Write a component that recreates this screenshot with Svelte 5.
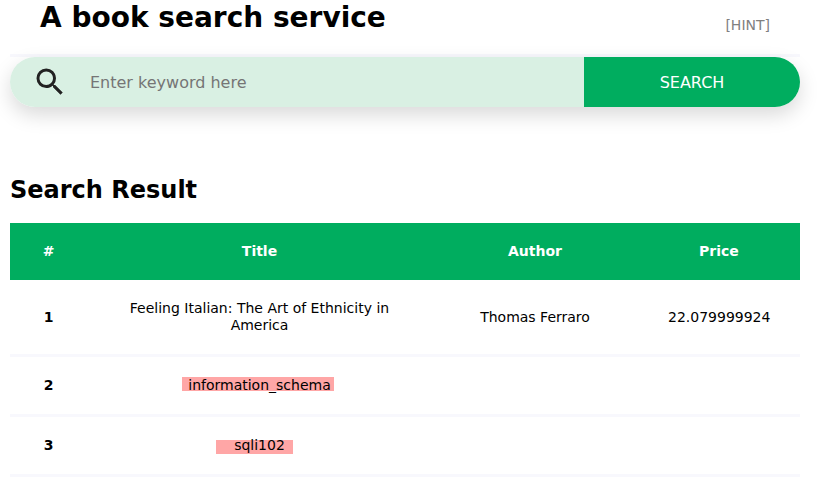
<script>
  const rows = [
    { title: 'Feeling Italian: The Art of Ethnicity in America', author: 'Thomas Ferraro', price: '22.079999924' },
    { title: 'information_schema', mark: 'schema', author: '', price: '' },
    { title: 'sqli102', mark: 'database', author: '', price: '' },
  ];
</script>

<div class="page">
  <header>
    <h1>A book search service</h1>
    <a class="hint" href="#hint">[HINT]</a>
  </header>

  <form class="search" onsubmit={(e) => e.preventDefault()}>
    <div class="field">
      <svg width="36" height="36" viewBox="0 0 24 24" aria-hidden="true">
        <path fill="#222" d="M15.5 14h-.79l-.28-.27A6.471 6.471 0 0 0 16 9.5 6.5 6.5 0 1 0 9.5 16c1.61 0 3.09-.59 4.23-1.57l.27.28v.79l5 4.99L20.49 19l-4.99-5zm-6 0C7.01 14 5 11.99 5 9.5S7.01 5 9.5 5 14 7.01 14 9.5 11.99 14 9.5 14z" />
      </svg>
      <input type="text" placeholder="Enter keyword here" />
    </div>
    <button type="submit">SEARCH</button>
  </form>

  <h2>Search Result</h2>

  <table>
    <colgroup>
      <col class="c-num" /><col class="c-title" /><col class="c-author" /><col class="c-price" />
    </colgroup>
    <thead>
      <tr><th>#</th><th>Title</th><th>Author</th><th>Price</th></tr>
    </thead>
    <tbody>
      {#each rows as row, i}
        <tr>
          <th>{i + 1}</th>
          <td>
            {#if row.mark}
              <span class="mark {row.mark}">{row.title}</span>
            {:else}
              {row.title}
            {/if}
          </td>
          <td>{row.author}</td>
          <td>{row.price}</td>
        </tr>
      {/each}
    </tbody>
  </table>
</div>

<style>
  :global(body) {
    background: #fff;
    overflow: hidden;
  }
  .page {
    width: 790px;
    margin-left: 10px;
    color: #000;
    font-family: "DejaVu Sans", sans-serif;
    font-size: 14px;
  }
  header {
    box-sizing: border-box;
    height: 57px;
    padding: 0 30px;
    display: flex;
    justify-content: space-between;
    align-items: flex-start;
    border-bottom: 3px solid #f8f8fd;
  }
  h1 {
    margin: 0;
    padding-top: 1px;
    font-size: 28px;
    line-height: 33px;
    white-space: nowrap;
  }
  .hint {
    margin-top: 17px;
    line-height: 17px;
    color: #808080;
    text-decoration: none;
  }
  .search {
    display: flex;
    height: 50px;
    border-radius: 25px;
    box-shadow: 0 8px 20px 0 rgba(0, 0, 0, 0.15);
    overflow: hidden;
  }
  .field {
    flex: 1;
    display: flex;
    align-items: center;
    gap: 22px;
    padding-left: 22px;
    background: #d9f0e3;
  }
  input {
    flex: 1;
    min-width: 0;
    height: 50px;
    padding: 0;
    border: 0;
    outline: 0;
    background: transparent;
    font: 16px "DejaVu Sans", sans-serif;
  }
  input::placeholder {
    color: #757575;
    opacity: 1;
  }
  button {
    width: 216px;
    padding: 0;
    border: 0;
    background: #00ad5f;
    color: #fff;
    font: 16px "DejaVu Sans", sans-serif;
  }
  h2 {
    margin: 69px 0 19px;
    font-size: 24px;
    line-height: 28px;
  }
  table {
    width: 790px;
    table-layout: fixed;
    border-collapse: separate;
    border-spacing: 0;
    text-align: center;
    line-height: 17px;
  }
  .c-num { width: 77px; }
  .c-title { width: 345px; }
  .c-author { width: 206px; }
  .c-price { width: 162px; }
  th, td {
    padding: 20px 30px;
    vertical-align: middle;
  }
  thead th {
    background: #00ad5f;
    color: #fff;
  }
  tbody th, tbody td {
    border-bottom: 3px solid #f8f8fd;
  }
  .mark {
    position: relative;
    z-index: 0;
  }
  .mark::before {
    content: '';
    position: absolute;
    z-index: -1;
    height: 14px;
    background: #ffa6a6;
  }
  .schema::before {
    left: -6px;
    top: 0;
    width: 152px;
  }
  .database::before {
    left: -18px;
    top: 3px;
    width: 77px;
  }
</style>
